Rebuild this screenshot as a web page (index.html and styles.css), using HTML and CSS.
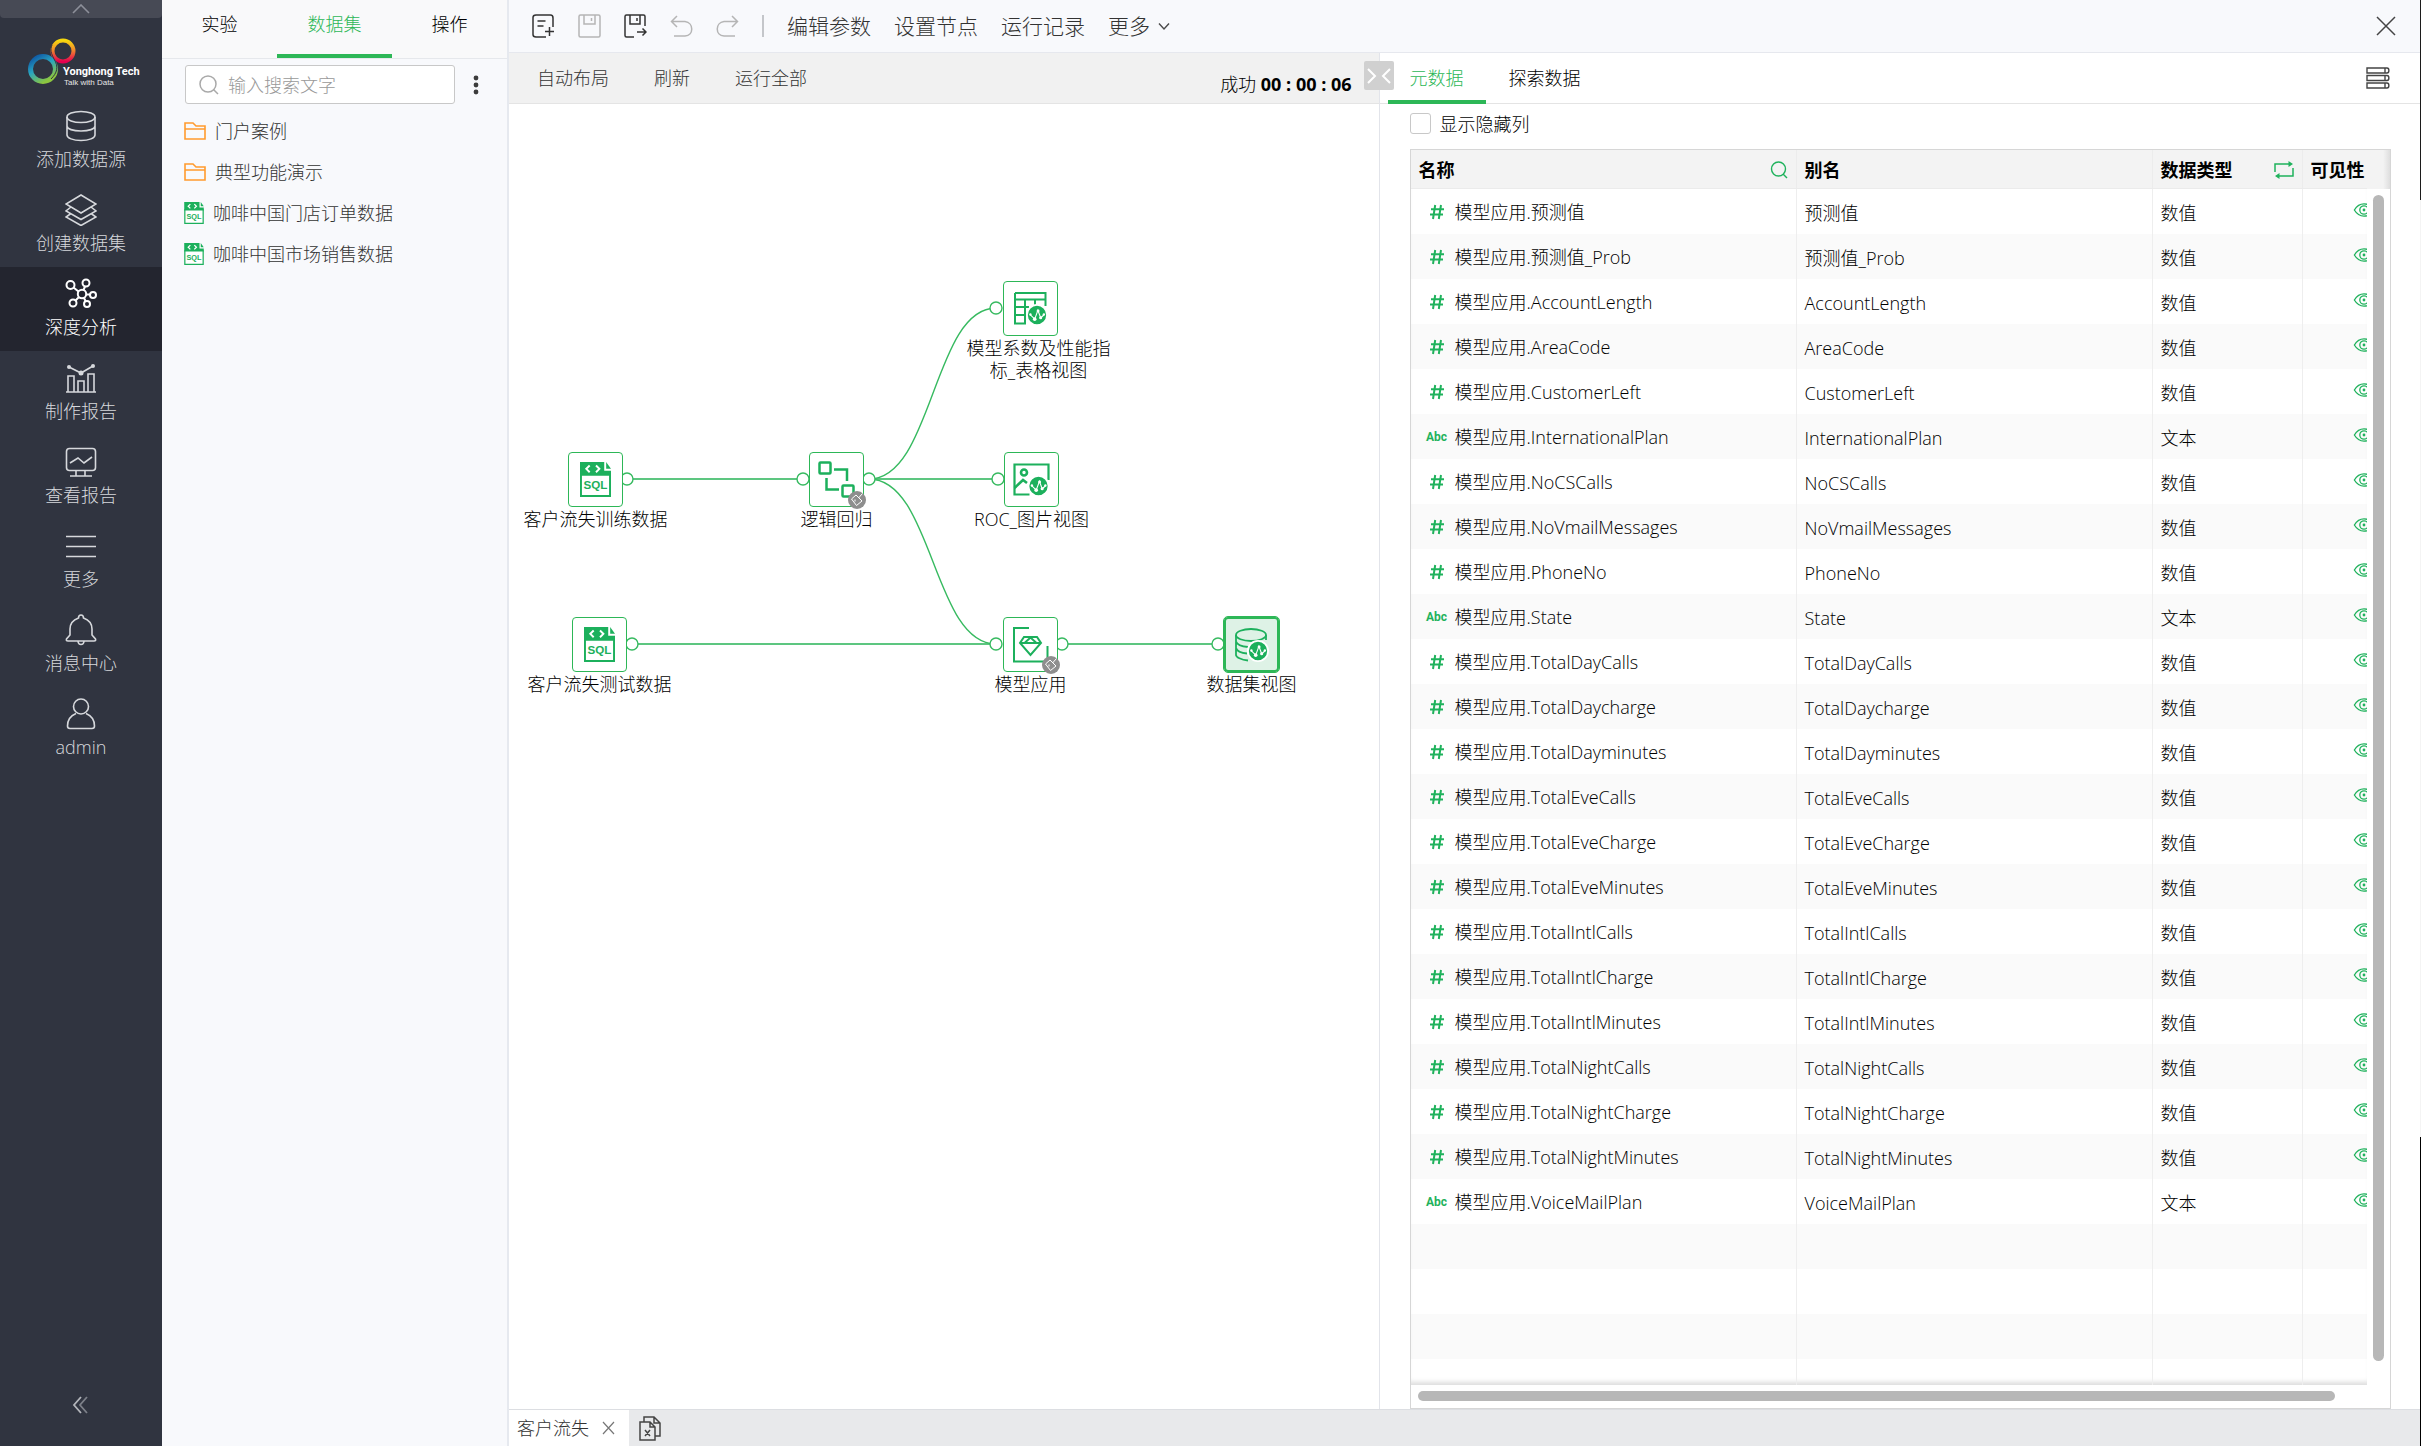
FILE: index.html
```html
<!DOCTYPE html>
<html lang="zh-CN">
<head>
<meta charset="utf-8">
<title>深度分析 - 客户流失</title>
<link rel="stylesheet" href="styles.css">
</head>
<body>
<svg class="sprite" aria-hidden="true">
  <defs>
    <linearGradient id="warm" x1="0" y1="0" x2="0" y2="1"><stop offset="0" stop-color="#f6d80e"/><stop offset=".45" stop-color="#f08a2c"/><stop offset="1" stop-color="#e4004f"/></linearGradient>
    <linearGradient id="cool" x1="0" y1="0" x2=".6" y2="1"><stop offset="0" stop-color="#0b4ea2"/><stop offset=".5" stop-color="#2aa6c0"/><stop offset="1" stop-color="#8cc63f"/></linearGradient>
    <symbol id="i-hash" viewBox="0 0 16 16"><path d="M6.2 1 4 15M12 1 9.8 15M2 5.2h13M1 10.6h13" stroke="#1fb25c" stroke-width="2" fill="none"/></symbol>
    <symbol id="i-eye" viewBox="0 0 24 16"><g fill="none" stroke="#1fb25c" stroke-width="1.500"><path d="M1 8C4 3 8 1 12 1S20 3 23 8c-3 5-7 7-11 7S4 13 1 8z"/><circle cx="12" cy="8" r="4.800"/></g><circle cx="12" cy="8" r="1.600" fill="#1fb25c"/></symbol>
    <symbol id="i-folder" viewBox="0 0 22 18"><path d="M1 1h8l3 3h9v13H1zM1 7h20" fill="none" stroke="#ff9b2e" stroke-width="1.6"/></symbol>
    <symbol id="i-sql" viewBox="0 0 32 36"><path d="M1 1h24l6 8v26H1z" fill="#fff"/><path d="M0 0h25v9h7v5H0z" fill="#1cb05c"/><path d="M27 0l5 7h-5z" fill="#1cb05c"/><path d="M1 12v23h30V12" fill="none" stroke="#1cb05c" stroke-width="2"/><path d="M10 3.500 6.500 7 10 10.500M16.500 3.500 20 7l-3.500 3.500" fill="none" stroke="#fff" stroke-width="2"/><text class="sql-text" x="16" y="28" text-anchor="middle">SQL</text></symbol>
    <symbol id="i-wave" viewBox="0 0 24 24"><circle cx="12" cy="12" r="11" fill="#1cb05c" stroke="#fff" stroke-width="2"/><path d="M4.500 11.500 9.500 16.500 13 7l3 8 3.500-3" fill="none" stroke="#fff" stroke-width="1.200"/><g fill="#fff"><circle cx="4.800" cy="11.500" r="1.300"/><circle cx="9.500" cy="16.500" r="2"/><circle cx="13.200" cy="7.500" r="1.600"/><circle cx="16" cy="15" r="1.700"/><circle cx="19.500" cy="11.500" r="1.300"/></g></symbol>
    <symbol id="i-brush" viewBox="0 0 18 18"><circle cx="9" cy="9" r="9" fill="#8e8e8e"/><path d="M3.500 8 8 4l6 6-5.500 4.500zM10.500 7l4-4.500M7 8.500v2" fill="none" stroke="#fff" stroke-width="1"/></symbol>
  </defs>
</svg>

<div class="app">
  <aside class="sidebar">
    <button class="sidebar-top" aria-label="收起"><svg width="18" height="10" viewBox="0 0 18 10"><path d="M1 9 9 1l8 8" fill="none" stroke="#8d909a" stroke-width="1.600"/></svg></button>
    <a class="logo" href="#">
      <svg width="124" height="50" viewBox="0 0 124 50" role="img" aria-label="Yonghong Tech">
        <circle cx="35" cy="13" r="10.500" fill="none" stroke="url(#warm)" stroke-width="4"/>
        <circle cx="15" cy="31" r="12.500" fill="none" stroke="url(#cool)" stroke-width="5"/>
        <path d="M24 7c-2 5-1 8 2 14 5 8 3 14-3 20" fill="none" stroke="#303440" stroke-width="1"/>
        <text class="logo-name" x="35" y="37">Yonghong Tech</text>
        <text class="logo-tag" x="36" y="47">Talk with Data</text>
      </svg>
    </a>
    <nav class="nav">
      <a class="nav-item" href="#"><svg class="nav-icon" viewBox="0 0 32 32"><ellipse cx="16" cy="7" rx="14" ry="5.500"/><path d="M2 7v18c0 3 6 5.500 14 5.500S30 28 30 25V7M2 16c0 3 6 5 14 5s14-2 14-5"/></svg>添加数据源</a>
      <a class="nav-item" href="#"><svg class="nav-icon" viewBox="0 0 32 32"><path d="M16 1l15 9-15 9L1 10zM6 13l-5 4 15 8.500L31 17l-5-4M6 19.500 1 23l15 8.500L31 23l-5-3.500"/></svg>创建数据集</a>
      <a class="nav-item active" href="#" aria-current="page"><svg class="nav-icon bold" viewBox="0 0 32 32"><circle cx="5.500" cy="7" r="4"/><circle cx="21" cy="5" r="3.500"/><circle cx="17" cy="16" r="4.200"/><circle cx="28" cy="17" r="3"/><circle cx="8" cy="25" r="3.500"/><circle cx="22" cy="26" r="3"/><path d="M8.500 9.500l5 4M20 8.500l-1.500 3.500M21 16.500h4M14 19l-3.500 3.500M19 20l1.700 3.300"/></svg>深度分析</a>
      <a class="nav-item" href="#"><svg class="nav-icon" viewBox="0 0 32 32"><path d="M1 30h30M3 30V14h6v16M13 30V19h6v11M23 30V12h6v18M4 5l12 6 12-7"/><g fill="#d6d8dc" stroke="none"><circle cx="4" cy="5" r="2"/><circle cx="16" cy="11" r="2.500"/><circle cx="28" cy="4" r="2"/></g></svg>制作报告</a>
      <a class="nav-item" href="#"><svg class="nav-icon" viewBox="0 0 32 32"><rect x="1.500" y="2.500" width="29" height="22" rx="3"/><path d="M5 17l8-5 6 5 8-6M11 25v5M20 25v5M5 30h22"/></svg>查看报告</a>
      <a class="nav-item" href="#"><svg class="nav-icon" viewBox="0 0 32 32"><path d="M1 6.500h30M1 16.500h30M1 26.500h30"/></svg>更多</a>
      <a class="nav-item" href="#"><svg class="nav-icon" viewBox="0 0 32 32"><path d="M13.500 4c0-4 5-4 5 0C24 6 27 10 27 15v6l3.500 4c.5 1.500 0 2-1.500 2H3c-1.500 0-2-.5-1.500-2L5 21v-6c0-5 3-9 8.500-11zM13 27.500c.5 4 5.500 4 6 0"/></svg>消息中心</a>
      <a class="nav-item" href="#"><svg class="nav-icon" viewBox="0 0 32 32"><circle cx="16" cy="8.500" r="7.500"/><path d="M11 15.500C5 18 2.500 22 2.500 28c0 2 1 2.500 2.500 2.500h22c1.500 0 2.500-.5 2.500-2.500 0-6-2.500-10-8.500-12.500"/></svg>admin</a>
    </nav>
    <button class="sidebar-fold" aria-label="折叠"><svg width="18" height="18" viewBox="0 0 18 18"><path d="M9 1 2 9l7 8" fill="none" stroke="#b3b5bb" stroke-width="1.800"/><path d="M15 1 8 9l7 8" fill="none" stroke="#7d8089" stroke-width="1.800"/></svg></button>
  </aside>

  <section class="library">
    <div class="lib-tabs" role="tablist">
      <button class="lib-tab" role="tab">实验</button>
      <button class="lib-tab active" role="tab" aria-selected="true">数据集</button>
      <button class="lib-tab" role="tab">操作</button>
    </div>
    <div class="lib-search">
      <label class="search-box">
        <svg width="20" height="20" viewBox="0 0 20 20"><circle cx="9" cy="9" r="8" fill="none" stroke="#a9a9a9" stroke-width="1.500"/><path d="M14.500 14.500 19 19" stroke="#a9a9a9" stroke-width="1.500"/></svg>
        <input type="text" placeholder="输入搜索文字" aria-label="搜索">
      </label>
      <button class="dots" aria-label="更多操作"><svg width="6" height="20" viewBox="0 0 6 20" fill="#3c3c3c"><circle cx="3" cy="3" r="2.400"/><circle cx="3" cy="10" r="2.400"/><circle cx="3" cy="17" r="2.400"/></svg></button>
    </div>
    <ul class="tree">
      <li><a href="#"><svg width="22" height="18"><use href="#i-folder"/></svg>门户案例</a></li>
      <li><a href="#"><svg width="22" height="18"><use href="#i-folder"/></svg>典型功能演示</a></li>
      <li><a href="#"><svg width="20" height="22"><use href="#i-sql"/></svg>咖啡中国门店订单数据</a></li>
      <li><a href="#"><svg width="20" height="22"><use href="#i-sql"/></svg>咖啡中国市场销售数据</a></li>
    </ul>
  </section>

  <main class="main">
    <header class="topbar">
      <button aria-label="新建"><svg class="tool-icon" viewBox="0 0 23 24"><path d="M21 13V4c0-2-.5-3-2.500-3H4C2 1 1 1.500 1 3.500v17c0 2 1 2.500 3 2.500h10M5.500 7h8M5.500 12h6M17.500 13v9M13 17.500h9"/></svg></button>
      <button aria-label="保存" disabled><svg class="tool-icon" viewBox="0 0 23 24"><rect x="1" y="1" width="21" height="22" rx="1.500"/><path d="M6 1v9h11V1M13.500 4v3"/></svg></button>
      <button aria-label="另存为"><svg class="tool-icon" viewBox="0 0 23 24"><path d="M21 12V2.500C21 1.500 20.500 1 19.500 1h-17C1.500 1 1 1.500 1 2.500v19c0 1 .5 1.500 1.500 1.500H10M6 1v9h10V1M13 4v3M13 18h9M18.500 14.500 22 18l-3.500 3.500"/></svg></button>
      <button aria-label="撤销" disabled><svg class="tool-icon" viewBox="0 0 23 24"><path d="M7 2 1.500 7.500 7 13M2 7.500h13c9 1 9 14 0 14.500H4"/></svg></button>
      <button aria-label="重做" disabled><svg class="tool-icon" viewBox="0 0 23 24"><path d="M16 2l5.500 5.500L16 13M21 7.500H8c-9 1-9 14 0 14.500h11"/></svg></button>
      <span class="divider"></span>
      <button>编辑参数</button>
      <button>设置节点</button>
      <button>运行记录</button>
      <button class="more">更多<svg width="12" height="9" viewBox="0 0 12 9"><path d="M1 1.500 6 7l5-5.500" fill="none" stroke="#4a4a4a" stroke-width="1.400"/></svg></button>
      <button class="close" aria-label="关闭"><svg width="20" height="20" viewBox="0 0 20 20"><path d="M1 1l18 18M19 1 1 19" stroke="#444" stroke-width="1.500"/></svg></button>
    </header>

    <div class="workspace">
      <section class="flow">
        <div class="flow-bar">
          <button>自动布局</button>
          <button>刷新</button>
          <button>运行全部</button>
          <p class="status">成功 <b>00 : 00 : 06</b></p>
        </div>
        <div class="canvas">
          <svg class="edges" fill="none">
            <g class="line"><path d="M118 375H294M360 375H489M123 540H487M553 540H709"/></g>
            <g class="curve"><path d="M360 375C424 375 424 204 487 204M360 375C424 375 424 540 487 540"/></g>
            <g class="port"><circle cx="118" cy="375" r="6"/><circle cx="294" cy="375" r="6"/><circle cx="360" cy="375" r="6"/><circle cx="487" cy="204" r="6"/><circle cx="489" cy="375" r="6"/><circle cx="123" cy="540" r="6"/><circle cx="487" cy="540" r="6"/><circle cx="553" cy="540" r="6"/><circle cx="709" cy="540" r="6"/></g>
          </svg>
          <div class="node" style="left:59px;top:348px"><button class="node-box" aria-label="客户流失训练数据"><svg width="31" height="35"><use href="#i-sql"/></svg></button><span class="node-label">客户流失训练数据</span></div>
          <div class="node" style="left:63px;top:513px"><button class="node-box" aria-label="客户流失测试数据"><svg width="31" height="35"><use href="#i-sql"/></svg></button><span class="node-label">客户流失测试数据</span></div>
          <div class="node" style="left:300px;top:348px"><button class="node-box" aria-label="逻辑回归"><svg width="37" height="37" viewBox="0 0 37 37" fill="none" stroke="#1cb05c" stroke-width="2.500"><rect x="1.500" y="1.500" width="11" height="11" rx="1"/><rect x="24.500" y="24.500" width="11" height="11" rx="1"/><path d="M16 8.500h13V20M8.500 17v11.500H21"/></svg></button><svg class="brush"><use href="#i-brush"/></svg><span class="node-label">逻辑回归</span></div>
          <div class="node" style="left:494px;top:177px"><button class="node-box" aria-label="模型系数及性能指标_表格视图"><svg width="34" height="34" viewBox="0 0 34 34"><path d="M1 1h30.500v13M1 1v30.500h11M1 7.500h30.500M1 15h14M1 23h11M11 7.500v24M21 7.500v6" fill="none" stroke="#1cb05c" stroke-width="2"/><use href="#i-wave" x="12" y="12" width="22" height="22"/></svg></button><span class="node-label wide">模型系数及性能指标_表格视图</span></div>
          <div class="node" style="left:495px;top:348px"><button class="node-box" aria-label="ROC_图片视图"><svg width="37" height="34" viewBox="0 0 37 34"><path d="M35.500 17V1.500h-34v30h15" fill="none" stroke="#1cb05c" stroke-width="2.200"/><circle cx="11" cy="9.500" r="3" fill="none" stroke="#1cb05c" stroke-width="2.600"/><path d="M1.500 25l8.500-8 4 3" fill="none" stroke="#1cb05c" stroke-width="2.600"/><use href="#i-wave" x="14.500" y="12" width="22" height="22"/></svg></button><span class="node-label">ROC_图片视图</span></div>
          <div class="node" style="left:494px;top:513px"><button class="node-box" aria-label="模型应用"><svg width="37" height="37" viewBox="0 0 37 37" fill="none" stroke="#1cb05c" stroke-width="2"><path d="M17 2H2v33.500h33.500V20"/><path d="M12 11h13l4 6-10.500 12L8 17zM8 17h21M12.500 17l6-5.500 6 5.500"/></svg></button><svg class="brush"><use href="#i-brush"/></svg><span class="node-label">模型应用</span></div>
          <div class="node" style="left:715px;top:513px"><button class="node-box selected" aria-label="数据集视图"><svg width="34" height="34" viewBox="0 0 34 34"><g fill="none" stroke="#1cb05c" stroke-width="1.800"><ellipse cx="16" cy="7" rx="15" ry="6"/><path d="M1 7v20c0 2 5 5 12 5.500M31 7v5M1 13.500c1 3 5 5 12 5.500M1 20c1 3 5 5 11 5.500"/></g><use href="#i-wave" x="12" y="12" width="22" height="22"/></svg></button><span class="node-label">数据集视图</span></div>
        </div>
      </section>

      <section class="meta">
        <button class="splitter" aria-label="折叠面板"><svg width="26" height="18" viewBox="0 0 26 18"><path d="M2 2l7 7-7 7M24 2l-7 7 7 7" fill="none" stroke="#fff" stroke-width="2"/></svg></button>
        <div class="meta-tabs" role="tablist">
          <button class="meta-tab active" role="tab" aria-selected="true">元数据</button>
          <button class="meta-tab" role="tab">探索数据</button>
          <button class="list-toggle" aria-label="列表"><svg width="24" height="22" viewBox="0 0 24 22" fill="none" stroke="#444" stroke-width="1.400"><path d="M1 1h20c2.500 0 2.500 5 0 5H1zM1 8.500h20c2.500 0 2.500 5 0 5H1zM1 16h20c2.500 0 2.500 5 0 5H1zM19 1v5M19 8.500v5M19 16v5"/></svg></button>
        </div>
        <label class="show-hidden"><input type="checkbox">显示隐藏列</label>
        <div class="grid-box">
          <div class="grid-view">
            <table>
              <colgroup><col class="c-name"><col class="c-alias"><col class="c-type"><col></colgroup>
              <thead><tr>
                <th><span class="head">名称<button aria-label="搜索"><svg width="18" height="18" viewBox="0 0 18 18" fill="none" stroke="#1fb25c" stroke-width="1.400"><circle cx="8.500" cy="8" r="7"/><path d="M13 13l4 4"/></svg></button></span></th>
                <th>别名</th>
                <th><span class="head">数据类型<button aria-label="切换类型"><svg width="20" height="18" viewBox="0 0 20 18" fill="none" stroke="#1fb25c" stroke-width="1.500"><path d="M1 11V3h15M19 7v8H4"/><path d="M14.500 0v6L19 3zM5.500 12v6L1 15z" fill="#1fb25c" stroke="none"/></svg></button></span></th>
                <th>可见性</th>
              </tr></thead>
              <tbody>
                <tr><td><span class="field"><svg class="num"><use href="#i-hash"/></svg>模型应用.预测值</span></td><td>预测值</td><td>数值</td><td class="vis"><svg><use href="#i-eye"/></svg></td></tr>
                <tr><td><span class="field"><svg class="num"><use href="#i-hash"/></svg>模型应用.预测值_Prob</span></td><td>预测值_Prob</td><td>数值</td><td class="vis"><svg><use href="#i-eye"/></svg></td></tr>
                <tr><td><span class="field"><svg class="num"><use href="#i-hash"/></svg>模型应用.AccountLength</span></td><td>AccountLength</td><td>数值</td><td class="vis"><svg><use href="#i-eye"/></svg></td></tr>
                <tr><td><span class="field"><svg class="num"><use href="#i-hash"/></svg>模型应用.AreaCode</span></td><td>AreaCode</td><td>数值</td><td class="vis"><svg><use href="#i-eye"/></svg></td></tr>
                <tr><td><span class="field"><svg class="num"><use href="#i-hash"/></svg>模型应用.CustomerLeft</span></td><td>CustomerLeft</td><td>数值</td><td class="vis"><svg><use href="#i-eye"/></svg></td></tr>
                <tr><td><span class="field"><span class="abc">Abc</span>模型应用.InternationalPlan</span></td><td>InternationalPlan</td><td>文本</td><td class="vis"><svg><use href="#i-eye"/></svg></td></tr>
                <tr><td><span class="field"><svg class="num"><use href="#i-hash"/></svg>模型应用.NoCSCalls</span></td><td>NoCSCalls</td><td>数值</td><td class="vis"><svg><use href="#i-eye"/></svg></td></tr>
                <tr><td><span class="field"><svg class="num"><use href="#i-hash"/></svg>模型应用.NoVmailMessages</span></td><td>NoVmailMessages</td><td>数值</td><td class="vis"><svg><use href="#i-eye"/></svg></td></tr>
                <tr><td><span class="field"><svg class="num"><use href="#i-hash"/></svg>模型应用.PhoneNo</span></td><td>PhoneNo</td><td>数值</td><td class="vis"><svg><use href="#i-eye"/></svg></td></tr>
                <tr><td><span class="field"><span class="abc">Abc</span>模型应用.State</span></td><td>State</td><td>文本</td><td class="vis"><svg><use href="#i-eye"/></svg></td></tr>
                <tr><td><span class="field"><svg class="num"><use href="#i-hash"/></svg>模型应用.TotalDayCalls</span></td><td>TotalDayCalls</td><td>数值</td><td class="vis"><svg><use href="#i-eye"/></svg></td></tr>
                <tr><td><span class="field"><svg class="num"><use href="#i-hash"/></svg>模型应用.TotalDaycharge</span></td><td>TotalDaycharge</td><td>数值</td><td class="vis"><svg><use href="#i-eye"/></svg></td></tr>
                <tr><td><span class="field"><svg class="num"><use href="#i-hash"/></svg>模型应用.TotalDayminutes</span></td><td>TotalDayminutes</td><td>数值</td><td class="vis"><svg><use href="#i-eye"/></svg></td></tr>
                <tr><td><span class="field"><svg class="num"><use href="#i-hash"/></svg>模型应用.TotalEveCalls</span></td><td>TotalEveCalls</td><td>数值</td><td class="vis"><svg><use href="#i-eye"/></svg></td></tr>
                <tr><td><span class="field"><svg class="num"><use href="#i-hash"/></svg>模型应用.TotalEveCharge</span></td><td>TotalEveCharge</td><td>数值</td><td class="vis"><svg><use href="#i-eye"/></svg></td></tr>
                <tr><td><span class="field"><svg class="num"><use href="#i-hash"/></svg>模型应用.TotalEveMinutes</span></td><td>TotalEveMinutes</td><td>数值</td><td class="vis"><svg><use href="#i-eye"/></svg></td></tr>
                <tr><td><span class="field"><svg class="num"><use href="#i-hash"/></svg>模型应用.TotalIntlCalls</span></td><td>TotalIntlCalls</td><td>数值</td><td class="vis"><svg><use href="#i-eye"/></svg></td></tr>
                <tr><td><span class="field"><svg class="num"><use href="#i-hash"/></svg>模型应用.TotalIntlCharge</span></td><td>TotalIntlCharge</td><td>数值</td><td class="vis"><svg><use href="#i-eye"/></svg></td></tr>
                <tr><td><span class="field"><svg class="num"><use href="#i-hash"/></svg>模型应用.TotalIntlMinutes</span></td><td>TotalIntlMinutes</td><td>数值</td><td class="vis"><svg><use href="#i-eye"/></svg></td></tr>
                <tr><td><span class="field"><svg class="num"><use href="#i-hash"/></svg>模型应用.TotalNightCalls</span></td><td>TotalNightCalls</td><td>数值</td><td class="vis"><svg><use href="#i-eye"/></svg></td></tr>
                <tr><td><span class="field"><svg class="num"><use href="#i-hash"/></svg>模型应用.TotalNightCharge</span></td><td>TotalNightCharge</td><td>数值</td><td class="vis"><svg><use href="#i-eye"/></svg></td></tr>
                <tr><td><span class="field"><svg class="num"><use href="#i-hash"/></svg>模型应用.TotalNightMinutes</span></td><td>TotalNightMinutes</td><td>数值</td><td class="vis"><svg><use href="#i-eye"/></svg></td></tr>
                <tr><td><span class="field"><span class="abc">Abc</span>模型应用.VoiceMailPlan</span></td><td>VoiceMailPlan</td><td>文本</td><td class="vis"><svg><use href="#i-eye"/></svg></td></tr>
                <tr><td></td><td></td><td></td><td></td></tr>
                <tr><td></td><td></td><td></td><td></td></tr>
                <tr><td></td><td></td><td></td><td></td></tr>
                <tr><td></td><td></td><td></td><td></td></tr>
              </tbody>
            </table>
          </div>
          <div class="v-track"><div class="v-thumb"></div></div>
          <div class="h-track"><div class="h-thumb"></div></div>
        </div>
      </section>
    </div>

    <footer class="sheets">
      <div class="sheet"><a href="#">客户流失</a><button aria-label="关闭标签"><svg width="13" height="14" viewBox="0 0 13 14"><path d="M1 1l11 12M12 1 1 13" stroke="#777" stroke-width="1.200"/></svg></button></div>
      <button class="close-all" aria-label="关闭全部"><svg width="22" height="25" viewBox="0 0 22 25" fill="none" stroke="#444" stroke-width="1.500"><path d="M1 6h10l5 5v13H1zM11 6v5h5M5 6V1h10l6 6v13h-5M15 1v6h6M6 14l5 6M11 14l-5 6"/></svg></button>
    </footer>
  </main>
  <div class="edge"></div>
</div>
</body>
</html>
```
FILE: styles.css
```css
* { box-sizing: border-box; }

body {
  margin: 0;
  font-family: "Open Sans", "Noto Sans CJK SC", sans-serif;
  font-size: 18px;
  font-weight: 300;
  line-height: 28px;
  color: #000;
}

button {
  margin: 0;
  padding: 0;
  border: 0;
  background: none;
  font: inherit;
  color: inherit;
}

a { color: inherit; text-decoration: none; }
svg { display: block; flex: none; }
.sprite { position: absolute; width: 0; height: 0; }

.app {
  display: grid;
  grid-template-columns: 162px 347px minmax(0, 1fr) 1px;
  height: 100vh;
  overflow: hidden;
}

.edge {
  background: linear-gradient(#1c1c1c 0 200px, #f4f4f4 200px calc(100% - 309px), #000 calc(100% - 309px));
}

/* Sidebar */
.sidebar {
  display: flex;
  flex-direction: column;
  background: #303440;
  color: #d6d8dc;
}
.sidebar-top {
  display: flex;
  justify-content: center;
  align-items: center;
  height: 18px;
  border-radius: 0 0 4px 4px;
  background: #474a55;
}
.logo { height: 81px; padding: 20px 0 0 28px; }
.logo-name { font: bold 11px Roboto, sans-serif; fill: #fff; }
.logo-tag { font: 8px "Liberation Sans", sans-serif; fill: #e6e6e6; }
.nav { flex: 1; }
.nav-item {
  display: flex;
  flex-direction: column;
  align-items: center;
  gap: 3px;
  height: 84px;
  padding-top: 11px;
}
.nav-item.active { background: #23252f; color: #fff; }
.nav-icon { width: 32px; height: 32px; fill: none; stroke: currentColor; stroke-width: 1.6; }
.nav-icon.bold { stroke-width: 2; }
.sidebar-fold { display: flex; justify-content: center; padding-bottom: 32px; }

/* Library */
.library { background: #f8f9fc; border-right: 2px solid #e6e9ef; }
.lib-tabs {
  display: grid;
  grid-template-columns: repeat(3, 1fr);
  height: 59px;
  border-bottom: 1px solid #e6e8ec;
  background: #f9f9fa;
}
.lib-tab { padding-bottom: 6px; border-bottom: 4px solid transparent; }
.lib-tab.active { border-color: #2db757; color: #2db757; }
.lib-search { display: flex; padding: 6px 10px 0 23px; }
.search-box {
  display: flex;
  flex: 1;
  align-items: center;
  gap: 9px;
  min-width: 0;
  height: 39px;
  padding: 0 13px;
  border: 1px solid #c8c8c8;
  border-radius: 3px;
  background: #fff;
}
.search-box input {
  flex: 1;
  min-width: 0;
  padding: 0;
  border: 0;
  outline: 0;
  background: none;
  font: inherit;
}
.search-box input::placeholder { color: #999; opacity: 1; }
.dots { display: flex; justify-content: center; align-items: center; width: 42px; }
.tree { margin: 6px 0 0; padding: 0 22px; list-style: none; color: #333; }
.tree a { display: flex; align-items: center; gap: 9px; height: 41px; }
.sql-text { font: bold 12px "Liberation Sans", sans-serif; fill: #1cb05c; }

/* Main area */
.main { display: flex; flex-direction: column; min-width: 0; min-height: 0; }
.topbar {
  display: flex;
  align-items: center;
  gap: 23px;
  height: 53px;
  padding: 0 24px 0 23px;
  border-bottom: 1px solid #e6e8ee;
  background: #f8f9fc;
  font-size: 21px;
  color: #333;
}
.topbar button:disabled { color: #b5b5b5; }
.tool-icon { width: 23px; height: 24px; fill: none; stroke: currentColor; stroke-width: 1.5; }
.divider { width: 2px; height: 22px; background: #c4c6ca; }
.more { display: flex; align-items: center; gap: 8px; }
.topbar .close { margin-left: auto; }

.workspace { display: flex; flex: 1; min-height: 0; }
.flow { display: flex; flex: 870; flex-direction: column; min-width: 0; }
.flow-bar {
  display: flex;
  align-items: center;
  gap: 45px;
  height: 51px;
  padding: 0 27px 0 28px;
  border-bottom: 1px solid #e4e4e4;
  background: #f1f1f1;
  color: #333;
}
.status { margin: 12px 0 0 auto; color: #000; }
.status b { font-weight: 700; }

/* Flow canvas */
.canvas { position: relative; flex: 1; background: #fff; overflow: hidden; }
.edges { position: absolute; inset: 0; width: 100%; height: 100%; }
.line { stroke: #5dc680; stroke-width: 2; }
.curve { stroke: #37ba60; stroke-width: 1.4; }
.port { stroke: #37ba60; stroke-width: 1.4; fill: #fff; }
.node { position: absolute; display: flex; flex-direction: column; align-items: center; width: 55px; }
.node-box {
  display: flex;
  justify-content: center;
  align-items: center;
  width: 55px;
  height: 55px;
  border: 1px solid #2db757;
  border-radius: 4px;
  background: #fff;
}
.node-box.selected { border-width: 2px; outline: 1px solid #2db757; background: #def2e6; }
.brush { position: absolute; left: 39px; top: 39px; width: 18px; height: 18px; }
.node-label { width: 150px; margin-top: 1px; line-height: 22px; text-align: center; }
.node-label.wide { width: 166px; padding-left: 16px; }

/* Metadata panel */
.meta {
  position: relative;
  display: flex;
  flex: 1041;
  flex-direction: column;
  min-width: 0;
  border-left: 1px solid #e2e4ea;
  background: #fff;
}
.splitter {
  position: absolute;
  left: -16px;
  top: 8px;
  display: flex;
  justify-content: center;
  align-items: center;
  width: 30px;
  height: 29px;
  border-radius: 2px;
  background: #d0d0d0;
}
.meta-tabs {
  display: flex;
  gap: 1px;
  height: 51px;
  padding: 0 30px 0 8px;
  border-bottom: 1px solid #e4e4e4;
}
.meta-tab { height: 51px; padding: 3px 22px 0; border-bottom: 4px solid transparent; }
.meta-tab.active { border-color: #2db757; color: #2db757; }
.list-toggle { margin-left: auto; }
.show-hidden {
  display: flex;
  align-items: center;
  gap: 9px;
  height: 45px;
  padding: 0 0 6px 30px;
}
.show-hidden input {
  appearance: none;
  width: 21px;
  height: 21px;
  margin: 0;
  border: 1px solid #c8c8c8;
  border-radius: 3px;
  background: #fff;
}
.grid-box {
  display: grid;
  grid-template-columns: minmax(0, 1fr) 23px;
  grid-template-rows: minmax(0, 1fr) 23px;
  flex: 1;
  min-height: 0;
  margin: 0 29px 0 30px;
  border: 1px solid #d6d6d6;
}
.grid-view { overflow: hidden; box-shadow: inset 0 -6px 5px -3px #ddd; }
table { width: 100%; table-layout: fixed; border-collapse: separate; border-spacing: 0; }
.c-name { width: 386px; }
.c-alias { width: 356px; }
.c-type { width: 150px; }
th {
  height: 39px;
  padding: 2px 0 0 8px;
  border-right: 1px solid #ececec;
  border-bottom: 1px solid #ebebeb;
  background: #f3f3f3;
  font-weight: 700;
  text-align: left;
  white-space: nowrap;
}
td {
  height: 45px;
  padding: 2px 0 0 8px;
  border-right: 1px solid #eee;
  white-space: nowrap;
}
th:last-child, td:last-child { border-right: 0; }
td:first-child { padding: 0 0 0 14px; }
tbody tr:nth-child(even) td { background: rgba(0, 0, 0, .02); }
.head { display: flex; align-items: center; justify-content: space-between; padding-right: 8px; }
.field { display: flex; align-items: center; gap: 6px; }
.num { width: 16px; height: 16px; margin: 0 4px; }
.abc { width: 24px; font: bold 12px Roboto, sans-serif; text-align: center; color: #1fb25c; }
td.vis { padding: 0 0 3px 50px; overflow: hidden; }
.vis svg { width: 22px; height: 14px; }
.v-track {
  padding: 45px 0 0 6px;
  background: linear-gradient(90deg, #f3f3f3 70%, #dedede) 0 0 / 100% 39px no-repeat;
}
.v-thumb { width: 11px; height: 98%; border-radius: 6px; background: #b7b7b7; }
.h-track { padding: 6px 32px 0 7px; }
.h-thumb { height: 10px; border-radius: 5px; background: #b7b7b7; }

/* Open sheets */
.sheets {
  display: flex;
  height: 37px;
  border-top: 1px solid #dcdee2;
  background: #e8e9eb;
  color: #333;
}
.sheet { display: flex; align-items: center; gap: 13px; width: 120px; padding-left: 8px; background: #fff; }
.close-all { padding: 0 10px; }
```
